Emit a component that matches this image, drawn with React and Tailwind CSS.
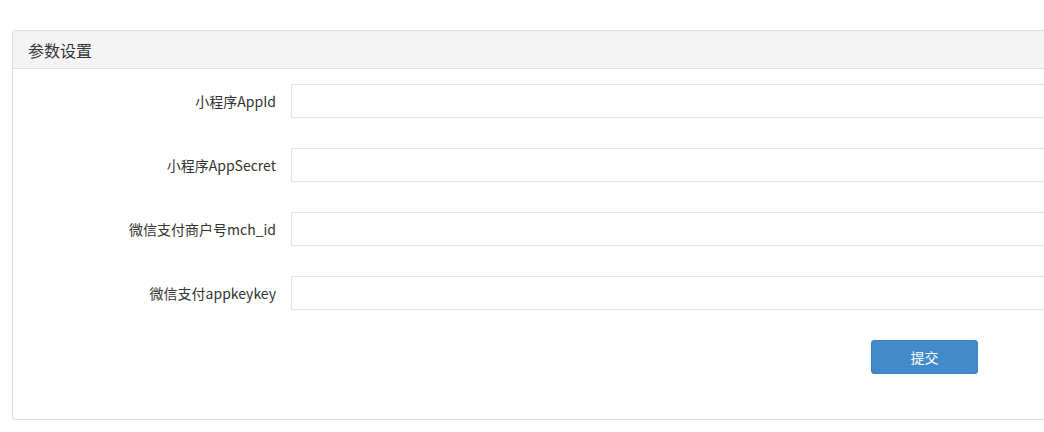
export default function App() {
  const rows = [
    "小程序AppId",
    "小程序AppSecret",
    "微信支付商户号mch_id",
    "微信支付appkeykey",
  ];
  return (
    <div
      className="w-[1044px] h-[432px] overflow-hidden bg-white pl-3 pt-[30px]"
      style={{ fontFamily: '"Noto Sans CJK SC", "Liberation Sans", sans-serif' }}
    >
      <div className="w-[1100px] h-[390px] border border-[#dddddd] rounded-[3px] flex flex-col">
        <div className="h-[38px] bg-[#f4f4f4] border-b border-[#dddddd] flex items-center pl-[15px] text-[16px] text-[#333333] rounded-t-[3px]">
          参数设置
        </div>
        <div className="flex flex-col gap-[30px] pt-[15px]">
          {rows.map((r) => (
            <div key={r} className="flex items-center">
              <div className="w-[278px] pr-[15px] text-right text-[14px] text-[#333333]">{r}</div>
              <div className="h-[34px] flex-1 border border-[#e3e3e3] bg-white" />
            </div>
          ))}
          <div className="flex">
            <div className="ml-[858px] w-[107px] h-[34px] rounded-[3px] bg-[#428bca] border border-[#3b80c0] text-white text-[14px] flex items-center justify-center">
              提交
            </div>
          </div>
        </div>
      </div>
    </div>
  );
}
